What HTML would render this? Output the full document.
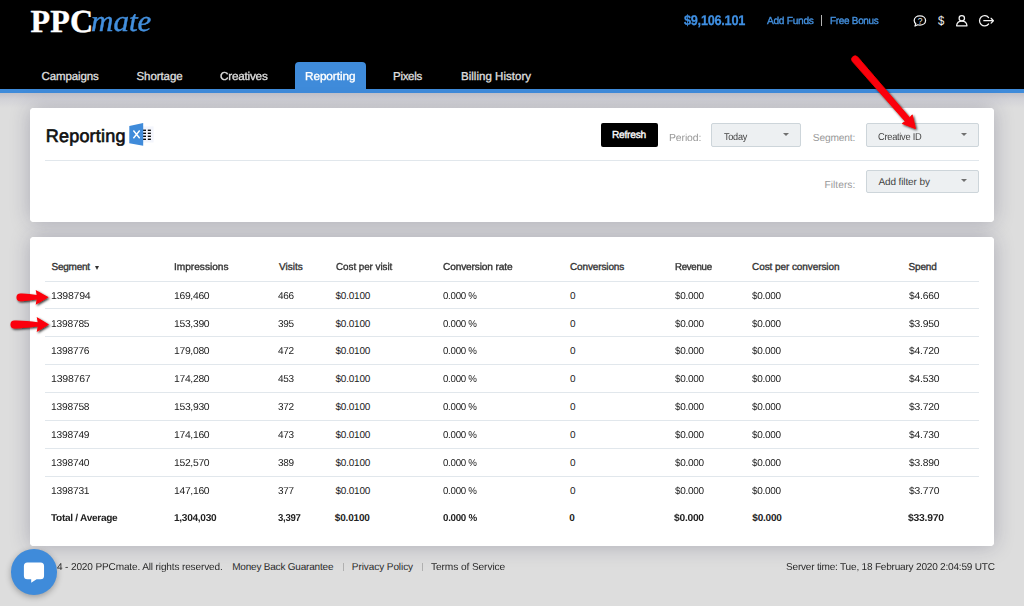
<!DOCTYPE html>
<html><head><meta charset="utf-8"><title>Reporting</title>
<style>
*{box-sizing:border-box;margin:0;padding:0}
html,body{width:1024px;height:606px;overflow:hidden}
body{background:#dddddd;text-rendering:geometricPrecision;font-family:"Liberation Sans",sans-serif;color:#222;position:relative}
.a{position:absolute}
.t{position:absolute;white-space:nowrap;line-height:1;transform-origin:0 50%}
#hdr{left:0;top:0;width:1024px;height:89px;background:#000}
#bluebar{left:0;top:89px;width:1024px;height:3.600px;background:#3f8bda}
#shade{left:0;top:92px;width:1024px;height:16px;background:linear-gradient(#bfbfc8,#d2d2d7 45%,#dddddd)}
#tab{left:294.700px;top:62.300px;width:71.800px;height:28px;background:#3f8bda;border-radius:4px 4px 0 0}
.card{background:#fff;border-radius:4px;box-shadow:0 0 20px rgba(30,30,70,.26)}
#c1{left:30px;top:108px;width:964px;height:114px}
#c2{left:30px;top:237px;width:964px;height:309px}
.hr{height:1px;background:#e1e7ec}
#refresh{left:601px;top:122.5px;width:56.5px;height:24.5px;background:#000;border-radius:2px}
.sel{background:#edf0f2;border:1px solid #cdd5da;border-radius:2px;height:24px}
.sel:after{content:"";position:absolute;right:11.200px;top:8.700px;border:3.800px solid transparent;border-top:3.600px solid #707070;border-bottom:0}
svg{position:absolute;overflow:visible}
</style></head><body>
<div class="a" id="hdr"></div>
<div class="a" id="shade"></div>
<div class="a" id="bluebar"></div>
<div class="a" id="tab"></div>
<div class="a" style="left:821.300px;top:15px;width:1px;height:11.200px;background:#b4b4b4"></div>
<svg id="icons" style="left:910px;top:12px" width="90" height="18" viewBox="910 12 90 18" fill="none" stroke="#f4f4f4" stroke-width="1.250" stroke-linecap="round" stroke-linejoin="round">
<path d="M919.900 15.800c3.200 0 5.700 2 5.700 4.600s-2.500 4.600-5.700 4.600c-.7 0-1.400-.1-2-.25l-2.900 1.300.8-2.400c-1-.85-1.600-2-1.600-3.250 0-2.600 2.500-4.600 5.700-4.600z"/>
<text x="920" y="23.500" style="font-family:'Liberation Sans',sans-serif" font-size="8.500" fill="#f4f4f4" stroke="none" text-anchor="middle">?</text>
<text x="941.200" y="25.300" style="font-family:'Liberation Sans',sans-serif" font-size="13" textLength="6.300" lengthAdjust="spacingAndGlyphs" fill="#f4f4f4" stroke="none" text-anchor="middle">$</text>
<circle cx="961.800" cy="18.200" r="2.700"/>
<path d="M956.600 25.800c.3-3.400 2.500-4.700 5.200-4.700s4.900 1.300 5.200 4.700z"/>
<path d="M988.600 17.600a5.100 5.100 0 1 0 0 6.400"/>
<path d="M983.800 20.700h9.400M991.100 18.300l2.300 2.400-2.300 2.400"/>
</svg>
<div class="a card" id="c1"></div>
<div class="a card" id="c2"></div>
<div class="a" style="left:30px;top:108px;width:964px;height:114px;background:#fff;border-radius:4px"></div>
<div class="a" style="left:30px;top:237px;width:964px;height:309px;background:#fff;border-radius:4px"></div>
<div class="a hr" style="left:45px;top:160px;width:934px"></div>
<div class="a" id="refresh"></div>
<div class="a sel" style="left:711px;top:123px;width:90px"></div>
<div class="a sel" style="left:866px;top:123px;width:113px"></div>
<div class="a sel" style="left:866px;top:169.700px;width:113px;height:23.600px"></div>
<svg id="xls" style="left:128px;top:121px" width="28" height="27" viewBox="128 121 28 27">
<rect x="143" y="126.4" width="10.6" height="16.1" fill="#f3f5fc"/>
<g fill="#0a0a0a"><rect x="143" y="129.6" width="3" height="1.4"/><rect x="147.8" y="129.6" width="3.1" height="1.4"/><rect x="143" y="132.6" width="3" height="1.4"/><rect x="147.8" y="132.6" width="3.1" height="1.4"/><rect x="143" y="135.6" width="3" height="1.4"/><rect x="147.800" y="135.6" width="3.1" height="1.4"/><rect x="143" y="138.6" width="3" height="1.4"/><rect x="147.8" y="138.6" width="3.1" height="1.4"/></g>
<path d="M129.300 125.900L143.200 123V145.800L129.300 143.300z" fill="#3f8bda"/>
<path d="M133.400 130.500L139.700 138.300M139.700 130.500L133.400 138.300" stroke="#fff" stroke-width="1.400" fill="none"/>
</svg>
<div class="a" style="left:94.800px;top:265.600px;border:2.400px solid transparent;border-top:4px solid #333;border-bottom:0"></div>
<div class="a hr" style="left:45px;top:281px;width:934px"></div>
<div class="a hr" style="left:45px;top:308px;width:934px"></div>
<div class="a hr" style="left:45px;top:336px;width:934px"></div>
<div class="a hr" style="left:45px;top:364px;width:934px"></div>
<div class="a hr" style="left:45px;top:392px;width:934px"></div>
<div class="a hr" style="left:45px;top:420px;width:934px"></div>
<div class="a hr" style="left:45px;top:448px;width:934px"></div>
<div class="a hr" style="left:45px;top:476px;width:934px"></div>

<div class="t" style="left:30.60px;top:5.20px;font-size:32px;color:#fff;letter-spacing:0.103px;font-weight:bold;-webkit-text-stroke:0.4px #fff;font-family:'Liberation Serif',serif;">PPC</div>
<div class="t" style="left:90.96px;top:6.88px;font-size:30px;color:#438fdd;letter-spacing:0px;font-weight:normal;font-style:italic;-webkit-text-stroke:0.4px #438fdd;font-family:'Liberation Serif',serif;transform:scaleX(1.0351);">mate</div>
<div class="t" style="left:41.50px;top:71.57px;font-size:11.5px;color:#dedede;letter-spacing:-0.115px;font-weight:normal;-webkit-text-stroke:0.35px currentColor;">Campaigns</div>
<div class="t" style="left:136.50px;top:71.57px;font-size:11.5px;color:#dedede;letter-spacing:-0.075px;font-weight:normal;-webkit-text-stroke:0.35px currentColor;">Shortage</div>
<div class="t" style="left:220.00px;top:71.57px;font-size:11.5px;color:#dedede;letter-spacing:-0.228px;font-weight:normal;-webkit-text-stroke:0.35px currentColor;transform:scaleX(1.0217);">Creatives</div>
<div class="t" style="left:305.00px;top:71.57px;font-size:11.5px;color:#fff;letter-spacing:-0.058px;font-weight:normal;-webkit-text-stroke:0.35px currentColor;transform:scaleX(1.0208);">Reporting</div>
<div class="t" style="left:393.00px;top:71.57px;font-size:11.5px;color:#dedede;letter-spacing:-0.285px;font-weight:normal;-webkit-text-stroke:0.35px currentColor;">Pixels</div>
<div class="t" style="left:461.00px;top:71.57px;font-size:11.5px;color:#dedede;letter-spacing:0.025px;font-weight:normal;-webkit-text-stroke:0.35px currentColor;">Billing History</div>
<div class="t" style="left:684.40px;top:12.65px;font-size:14px;color:#3f8fe2;letter-spacing:-0.3px;font-weight:bold;-webkit-text-stroke:0.25px #3f8fe2;transform:scaleX(0.91);">$9,106.101</div>
<div class="t" style="left:767.00px;top:16.87px;font-size:10.2px;color:#438fdd;letter-spacing:-0.3px;font-weight:normal;-webkit-text-stroke:0.35px currentColor;transform:scaleX(0.9994);">Add Funds</div>
<div class="t" style="left:830.00px;top:16.87px;font-size:10.2px;color:#438fdd;letter-spacing:-0.3px;font-weight:normal;-webkit-text-stroke:0.35px currentColor;transform:scaleX(0.9775);">Free Bonus</div>
<div class="t" style="left:45.80px;top:126.86px;font-size:18px;color:#111;letter-spacing:0.195px;font-weight:normal;-webkit-text-stroke:0.65px #111;">Reporting</div>
<div class="t" style="left:612.00px;top:130.97px;font-size:10.2px;color:#fff;letter-spacing:-0.251px;font-weight:normal;-webkit-text-stroke:0.35px currentColor;">Refresh</div>
<div class="t" style="left:668.50px;top:133.97px;font-size:10.2px;color:#999;letter-spacing:-0.116px;font-weight:normal;transform:scaleX(1.025);">Period:</div>
<div class="t" style="left:723.50px;top:132.63px;font-size:10px;color:#444;letter-spacing:-0.3px;font-weight:normal;transform:scaleX(0.9123);">Today</div>
<div class="t" style="left:812.80px;top:134.27px;font-size:10.2px;color:#999;letter-spacing:-0.154px;font-weight:normal;">Segment:</div>
<div class="t" style="left:878.40px;top:132.63px;font-size:10px;color:#444;letter-spacing:-0.3px;font-weight:normal;transform:scaleX(0.9296);">Creative ID</div>
<div class="t" style="left:824.60px;top:180.57px;font-size:10.2px;color:#999;letter-spacing:0.01px;font-weight:normal;">Filters:</div>
<div class="t" style="left:878.40px;top:178.23px;font-size:10px;color:#444;letter-spacing:-0.109px;font-weight:normal;">Add filter by</div>
<div class="t" style="left:51.50px;top:262.54px;font-size:10px;color:#333;letter-spacing:-0.249px;font-weight:normal;-webkit-text-stroke:0.35px currentColor;">Segment</div>
<div class="t" style="left:173.50px;top:262.54px;font-size:10px;color:#333;letter-spacing:-0.016px;font-weight:normal;-webkit-text-stroke:0.35px currentColor;transform:scaleX(1.0142);">Impressions</div>
<div class="t" style="left:279.00px;top:262.54px;font-size:10px;color:#333;letter-spacing:0.008px;font-weight:normal;-webkit-text-stroke:0.35px currentColor;">Visits</div>
<div class="t" style="left:335.50px;top:262.54px;font-size:10px;color:#333;letter-spacing:-0.059px;font-weight:normal;-webkit-text-stroke:0.35px currentColor;transform:scaleX(0.9871);">Cost per visit</div>
<div class="t" style="left:443.00px;top:262.54px;font-size:10px;color:#333;letter-spacing:-0.145px;font-weight:normal;-webkit-text-stroke:0.35px currentColor;transform:scaleX(1.0147);">Conversion rate</div>
<div class="t" style="left:570.00px;top:262.54px;font-size:10px;color:#333;letter-spacing:-0.133px;font-weight:normal;-webkit-text-stroke:0.35px currentColor;">Conversions</div>
<div class="t" style="left:674.50px;top:262.54px;font-size:10px;color:#333;letter-spacing:-0.3px;font-weight:normal;-webkit-text-stroke:0.35px currentColor;transform:scaleX(0.9698);">Revenue</div>
<div class="t" style="left:752.00px;top:262.54px;font-size:10px;color:#333;letter-spacing:-0.076px;font-weight:normal;-webkit-text-stroke:0.35px currentColor;">Cost per conversion</div>
<div class="t" style="left:908.50px;top:262.54px;font-size:10px;color:#333;letter-spacing:-0.151px;font-weight:normal;-webkit-text-stroke:0.35px currentColor;">Spend</div>
<div class="t" style="left:50.50px;top:292.00px;font-size:10px;color:#222;letter-spacing:-0.228px;font-weight:normal;transform:scaleX(1.0556);">1398794</div>
<div class="t" style="left:173.50px;top:292.00px;font-size:10px;color:#222;letter-spacing:-0.3px;font-weight:normal;transform:scaleX(1.0369);">169,460</div>
<div class="t" style="left:278.00px;top:292.00px;font-size:10px;color:#222;letter-spacing:-0.3px;font-weight:normal;transform:scaleX(1.0009);">466</div>
<div class="t" style="left:335.50px;top:292.00px;font-size:10px;color:#222;letter-spacing:-0.223px;font-weight:normal;">$0.0100</div>
<div class="t" style="left:443.00px;top:292.00px;font-size:10px;color:#222;letter-spacing:-0.3px;font-weight:normal;transform:scaleX(0.9714);">0.000 %</div>
<div class="t" style="left:570.00px;top:292.00px;font-size:10px;color:#222;letter-spacing:0px;font-weight:normal;">0</div>
<div class="t" style="left:674.50px;top:292.00px;font-size:10px;color:#222;letter-spacing:-0.3px;font-weight:normal;transform:scaleX(0.9992);">$0.000</div>
<div class="t" style="left:752.00px;top:292.00px;font-size:10px;color:#222;letter-spacing:-0.3px;font-weight:normal;transform:scaleX(0.9992);">$0.000</div>
<div class="t" style="left:908.50px;top:292.00px;font-size:10px;color:#222;letter-spacing:-0.205px;font-weight:normal;transform:scaleX(1.0345);">$4.660</div>
<div class="t" style="left:50.50px;top:320.00px;font-size:10px;color:#222;letter-spacing:-0.228px;font-weight:normal;transform:scaleX(1.027);">1398785</div>
<div class="t" style="left:173.50px;top:320.00px;font-size:10px;color:#222;letter-spacing:-0.3px;font-weight:normal;transform:scaleX(1.0369);">153,390</div>
<div class="t" style="left:278.00px;top:320.00px;font-size:10px;color:#222;letter-spacing:-0.3px;font-weight:normal;transform:scaleX(1.0009);">395</div>
<div class="t" style="left:335.50px;top:320.00px;font-size:10px;color:#222;letter-spacing:-0.223px;font-weight:normal;">$0.0100</div>
<div class="t" style="left:443.00px;top:320.00px;font-size:10px;color:#222;letter-spacing:-0.3px;font-weight:normal;transform:scaleX(0.9714);">0.000 %</div>
<div class="t" style="left:570.00px;top:320.00px;font-size:10px;color:#222;letter-spacing:0px;font-weight:normal;">0</div>
<div class="t" style="left:674.50px;top:320.00px;font-size:10px;color:#222;letter-spacing:-0.3px;font-weight:normal;transform:scaleX(0.9992);">$0.000</div>
<div class="t" style="left:752.00px;top:320.00px;font-size:10px;color:#222;letter-spacing:-0.3px;font-weight:normal;transform:scaleX(0.9992);">$0.000</div>
<div class="t" style="left:908.50px;top:320.00px;font-size:10px;color:#222;letter-spacing:-0.205px;font-weight:normal;transform:scaleX(1.0345);">$3.950</div>
<div class="t" style="left:50.50px;top:347.00px;font-size:10px;color:#222;letter-spacing:-0.228px;font-weight:normal;transform:scaleX(1.027);">1398776</div>
<div class="t" style="left:173.50px;top:347.00px;font-size:10px;color:#222;letter-spacing:-0.3px;font-weight:normal;transform:scaleX(1.0369);">179,080</div>
<div class="t" style="left:278.00px;top:347.00px;font-size:10px;color:#222;letter-spacing:-0.3px;font-weight:normal;transform:scaleX(1.0009);">472</div>
<div class="t" style="left:335.50px;top:347.00px;font-size:10px;color:#222;letter-spacing:-0.223px;font-weight:normal;">$0.0100</div>
<div class="t" style="left:443.00px;top:347.00px;font-size:10px;color:#222;letter-spacing:-0.3px;font-weight:normal;transform:scaleX(0.9714);">0.000 %</div>
<div class="t" style="left:570.00px;top:347.00px;font-size:10px;color:#222;letter-spacing:0px;font-weight:normal;">0</div>
<div class="t" style="left:674.50px;top:347.00px;font-size:10px;color:#222;letter-spacing:-0.3px;font-weight:normal;transform:scaleX(0.9992);">$0.000</div>
<div class="t" style="left:752.00px;top:347.00px;font-size:10px;color:#222;letter-spacing:-0.3px;font-weight:normal;transform:scaleX(0.9992);">$0.000</div>
<div class="t" style="left:908.50px;top:347.00px;font-size:10px;color:#222;letter-spacing:-0.205px;font-weight:normal;transform:scaleX(1.0345);">$4.720</div>
<div class="t" style="left:50.50px;top:375.00px;font-size:10px;color:#222;letter-spacing:-0.228px;font-weight:normal;transform:scaleX(1.0556);">1398767</div>
<div class="t" style="left:173.50px;top:375.00px;font-size:10px;color:#222;letter-spacing:-0.3px;font-weight:normal;transform:scaleX(1.0369);">174,280</div>
<div class="t" style="left:278.00px;top:375.00px;font-size:10px;color:#222;letter-spacing:-0.3px;font-weight:normal;transform:scaleX(1.0009);">453</div>
<div class="t" style="left:335.50px;top:375.00px;font-size:10px;color:#222;letter-spacing:-0.223px;font-weight:normal;">$0.0100</div>
<div class="t" style="left:443.00px;top:375.00px;font-size:10px;color:#222;letter-spacing:-0.3px;font-weight:normal;transform:scaleX(0.9714);">0.000 %</div>
<div class="t" style="left:570.00px;top:375.00px;font-size:10px;color:#222;letter-spacing:0px;font-weight:normal;">0</div>
<div class="t" style="left:674.50px;top:375.00px;font-size:10px;color:#222;letter-spacing:-0.3px;font-weight:normal;transform:scaleX(0.9992);">$0.000</div>
<div class="t" style="left:752.00px;top:375.00px;font-size:10px;color:#222;letter-spacing:-0.3px;font-weight:normal;transform:scaleX(0.9992);">$0.000</div>
<div class="t" style="left:908.50px;top:375.00px;font-size:10px;color:#222;letter-spacing:-0.205px;font-weight:normal;transform:scaleX(1.0345);">$4.530</div>
<div class="t" style="left:50.50px;top:403.00px;font-size:10px;color:#222;letter-spacing:-0.228px;font-weight:normal;transform:scaleX(1.027);">1398758</div>
<div class="t" style="left:173.50px;top:403.00px;font-size:10px;color:#222;letter-spacing:-0.3px;font-weight:normal;transform:scaleX(1.0369);">153,930</div>
<div class="t" style="left:278.00px;top:403.00px;font-size:10px;color:#222;letter-spacing:-0.3px;font-weight:normal;transform:scaleX(1.0009);">372</div>
<div class="t" style="left:335.50px;top:403.00px;font-size:10px;color:#222;letter-spacing:-0.223px;font-weight:normal;">$0.0100</div>
<div class="t" style="left:443.00px;top:403.00px;font-size:10px;color:#222;letter-spacing:-0.3px;font-weight:normal;transform:scaleX(0.9714);">0.000 %</div>
<div class="t" style="left:570.00px;top:403.00px;font-size:10px;color:#222;letter-spacing:0px;font-weight:normal;">0</div>
<div class="t" style="left:674.50px;top:403.00px;font-size:10px;color:#222;letter-spacing:-0.3px;font-weight:normal;transform:scaleX(0.9992);">$0.000</div>
<div class="t" style="left:752.00px;top:403.00px;font-size:10px;color:#222;letter-spacing:-0.3px;font-weight:normal;transform:scaleX(0.9992);">$0.000</div>
<div class="t" style="left:908.50px;top:403.00px;font-size:10px;color:#222;letter-spacing:-0.205px;font-weight:normal;transform:scaleX(1.0345);">$3.720</div>
<div class="t" style="left:50.50px;top:431.00px;font-size:10px;color:#222;letter-spacing:-0.228px;font-weight:normal;transform:scaleX(1.027);">1398749</div>
<div class="t" style="left:173.50px;top:431.00px;font-size:10px;color:#222;letter-spacing:-0.3px;font-weight:normal;transform:scaleX(1.0369);">174,160</div>
<div class="t" style="left:278.00px;top:431.00px;font-size:10px;color:#222;letter-spacing:-0.3px;font-weight:normal;transform:scaleX(1.0009);">473</div>
<div class="t" style="left:335.50px;top:431.00px;font-size:10px;color:#222;letter-spacing:-0.223px;font-weight:normal;">$0.0100</div>
<div class="t" style="left:443.00px;top:431.00px;font-size:10px;color:#222;letter-spacing:-0.3px;font-weight:normal;transform:scaleX(0.9714);">0.000 %</div>
<div class="t" style="left:570.00px;top:431.00px;font-size:10px;color:#222;letter-spacing:0px;font-weight:normal;">0</div>
<div class="t" style="left:674.50px;top:431.00px;font-size:10px;color:#222;letter-spacing:-0.3px;font-weight:normal;transform:scaleX(0.9992);">$0.000</div>
<div class="t" style="left:752.00px;top:431.00px;font-size:10px;color:#222;letter-spacing:-0.3px;font-weight:normal;transform:scaleX(0.9992);">$0.000</div>
<div class="t" style="left:908.50px;top:431.00px;font-size:10px;color:#222;letter-spacing:-0.205px;font-weight:normal;transform:scaleX(1.0345);">$4.730</div>
<div class="t" style="left:50.50px;top:459.00px;font-size:10px;color:#222;letter-spacing:-0.228px;font-weight:normal;transform:scaleX(1.027);">1398740</div>
<div class="t" style="left:173.50px;top:459.00px;font-size:10px;color:#222;letter-spacing:-0.3px;font-weight:normal;transform:scaleX(1.0369);">152,570</div>
<div class="t" style="left:278.00px;top:459.00px;font-size:10px;color:#222;letter-spacing:-0.3px;font-weight:normal;transform:scaleX(1.0009);">389</div>
<div class="t" style="left:335.50px;top:459.00px;font-size:10px;color:#222;letter-spacing:-0.223px;font-weight:normal;">$0.0100</div>
<div class="t" style="left:443.00px;top:459.00px;font-size:10px;color:#222;letter-spacing:-0.3px;font-weight:normal;transform:scaleX(0.9714);">0.000 %</div>
<div class="t" style="left:570.00px;top:459.00px;font-size:10px;color:#222;letter-spacing:0px;font-weight:normal;">0</div>
<div class="t" style="left:674.50px;top:459.00px;font-size:10px;color:#222;letter-spacing:-0.3px;font-weight:normal;transform:scaleX(0.9992);">$0.000</div>
<div class="t" style="left:752.00px;top:459.00px;font-size:10px;color:#222;letter-spacing:-0.3px;font-weight:normal;transform:scaleX(0.9992);">$0.000</div>
<div class="t" style="left:908.50px;top:459.00px;font-size:10px;color:#222;letter-spacing:-0.205px;font-weight:normal;transform:scaleX(1.0345);">$3.890</div>
<div class="t" style="left:50.50px;top:487.00px;font-size:10px;color:#222;letter-spacing:-0.228px;font-weight:normal;transform:scaleX(1.027);">1398731</div>
<div class="t" style="left:173.50px;top:487.00px;font-size:10px;color:#222;letter-spacing:-0.3px;font-weight:normal;transform:scaleX(1.0369);">147,160</div>
<div class="t" style="left:278.00px;top:487.00px;font-size:10px;color:#222;letter-spacing:-0.3px;font-weight:normal;transform:scaleX(1.0009);">377</div>
<div class="t" style="left:335.50px;top:487.00px;font-size:10px;color:#222;letter-spacing:-0.223px;font-weight:normal;">$0.0100</div>
<div class="t" style="left:443.00px;top:487.00px;font-size:10px;color:#222;letter-spacing:-0.3px;font-weight:normal;transform:scaleX(0.9714);">0.000 %</div>
<div class="t" style="left:570.00px;top:487.00px;font-size:10px;color:#222;letter-spacing:0px;font-weight:normal;">0</div>
<div class="t" style="left:674.50px;top:487.00px;font-size:10px;color:#222;letter-spacing:-0.3px;font-weight:normal;transform:scaleX(0.9992);">$0.000</div>
<div class="t" style="left:752.00px;top:487.00px;font-size:10px;color:#222;letter-spacing:-0.3px;font-weight:normal;transform:scaleX(0.9992);">$0.000</div>
<div class="t" style="left:908.50px;top:487.00px;font-size:10px;color:#222;letter-spacing:-0.205px;font-weight:normal;transform:scaleX(1.0345);">$3.770</div>
<div class="t" style="left:50.80px;top:514.13px;font-size:10px;color:#222;letter-spacing:-0.3px;font-weight:bold;transform:scaleX(1.0104);">Total / Average</div>
<div class="t" style="left:173.80px;top:514.13px;font-size:10px;color:#222;letter-spacing:-0.3px;font-weight:bold;transform:scaleX(1.0117);">1,304,030</div>
<div class="t" style="left:278.30px;top:514.13px;font-size:10px;color:#222;letter-spacing:-0.3px;font-weight:bold;transform:scaleX(0.9583);">3,397</div>
<div class="t" style="left:334.80px;top:514.13px;font-size:10px;color:#222;letter-spacing:-0.181px;font-weight:bold;">$0.0100</div>
<div class="t" style="left:443.30px;top:514.13px;font-size:10px;color:#222;letter-spacing:-0.3px;font-weight:bold;transform:scaleX(0.9785);">0.000 %</div>
<div class="t" style="left:569.30px;top:514.13px;font-size:10px;color:#222;letter-spacing:0px;font-weight:bold;">0</div>
<div class="t" style="left:673.80px;top:514.13px;font-size:10px;color:#222;letter-spacing:-0.255px;font-weight:bold;transform:scaleX(1.0259);">$0.000</div>
<div class="t" style="left:752.30px;top:514.13px;font-size:10px;color:#222;letter-spacing:-0.205px;font-weight:bold;">$0.000</div>
<div class="t" style="left:907.80px;top:514.13px;font-size:10px;color:#222;letter-spacing:-0.223px;font-weight:bold;transform:scaleX(1.0368);">$33.970</div>
<div class="t" style="left:27.00px;top:562.74px;font-size:10px;color:#2a2a2a;letter-spacing:0.1px;font-weight:normal;">© 201</div>
<div class="t" style="left:57.00px;top:562.74px;font-size:10px;color:#2a2a2a;letter-spacing:-0.138px;font-weight:normal;transform:scaleX(1.0046);">4 - 2020 PPCmate. All rights reserved.</div>
<div class="t" style="left:232.20px;top:562.74px;font-size:10px;color:#2a2a2a;letter-spacing:-0.2px;font-weight:normal;">Money Back Guarantee</div>
<div class="t" style="left:351.80px;top:562.74px;font-size:10px;color:#2a2a2a;letter-spacing:-0.072px;font-weight:normal;">Privacy Policy</div>
<div class="t" style="left:431.00px;top:562.74px;font-size:10px;color:#2a2a2a;letter-spacing:-0.107px;font-weight:normal;transform:scaleX(1.0181);">Terms of Service</div>
<div class="t" style="left:785.50px;top:562.74px;font-size:10px;color:#2a2a2a;letter-spacing:-0.218px;font-weight:normal;transform:scaleX(1.0073);">Server time: Tue, 18 February 2020 2:04:59 UTC</div>
<div class="a" style="left:343px;top:563px;width:1px;height:8px;background:#b0b0b0"></div>
<div class="a" style="left:422.400px;top:563px;width:1px;height:8px;background:#b0b0b0"></div>
<div class="a" style="left:11.100px;top:549.200px;width:45.600px;height:45.600px;border-radius:50%;background:#3f8bda;box-shadow:0 2px 6px rgba(0,0,0,.3)"></div>
<svg style="left:22px;top:560px" width="24" height="24" viewBox="22 560 24 24"><path d="M27.400 562.600h13.150a3.500 3.500 0 0 1 3.500 3.500v9.600a3.500 3.500 0 0 1-3.500 3.500h-3.950l-5.400 3.500v-3.500h-3.800a3.500 3.500 0 0 1-3.500-3.500v-9.600a3.500 3.500 0 0 1 3.500-3.500z" fill="#fff"/></svg>
<svg id="arrows" style="left:0;top:0" width="1024" height="606" viewBox="0 0 1024 606">
<defs><filter id="ds" x="-20%" y="-20%" width="150%" height="150%"><feDropShadow dx="1.2" dy="1.2" stdDeviation="0.9" flood-color="#000" flood-opacity=".8"/></filter></defs>
<g fill="#fb0007" filter="url(#ds)">
<path d="M857.500 56.850A3.450 3.450 0 0 0 852.300 61.350L905.300 121.450L902.100 123.500L915.500 128.700L912.250 114.800L909.700 117.700Z" stroke="#fb0007" stroke-width=".8" stroke-linejoin="round"/>
<path d="M20.400 293.400c6 -.2 10.500 .9 16.300 1.600l-1-5.100 12.900 7.400-12.900 7.450 1-5.450c-5.800 .8-10.300 2-16.300 2a3.950 3.950 0 0 1 0-7.900z"/>
<path d="M14.400 320.600c8 -.2 14.500 .9 23.300 1.600l-1-5.100 12.300 7.400-12.300 7.500 1-5.500c-8.800 .8-15.300 2-23.300 2a3.950 3.950 0 0 1 0-7.900z"/>
</g></svg>
</body></html>
